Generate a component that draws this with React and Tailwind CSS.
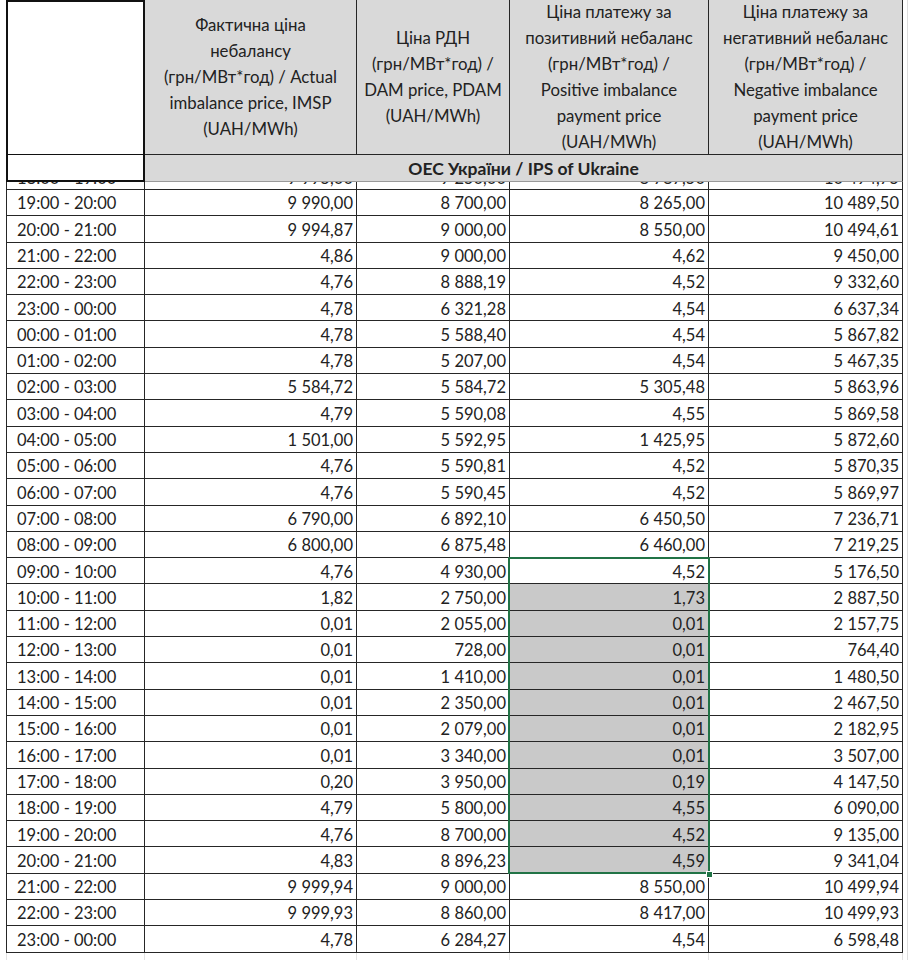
const rows = [
  ["19:00 - 20:00", "9 990,00", "8 700,00", "8 265,00", "10 489,50"],
  ["20:00 - 21:00", "9 994,87", "9 000,00", "8 550,00", "10 494,61"],
  ["21:00 - 22:00", "4,86", "9 000,00", "4,62", "9 450,00"],
  ["22:00 - 23:00", "4,76", "8 888,19", "4,52", "9 332,60"],
  ["23:00 - 00:00", "4,78", "6 321,28", "4,54", "6 637,34"],
  ["00:00 - 01:00", "4,78", "5 588,40", "4,54", "5 867,82"],
  ["01:00 - 02:00", "4,78", "5 207,00", "4,54", "5 467,35"],
  ["02:00 - 03:00", "5 584,72", "5 584,72", "5 305,48", "5 863,96"],
  ["03:00 - 04:00", "4,79", "5 590,08", "4,55", "5 869,58"],
  ["04:00 - 05:00", "1 501,00", "5 592,95", "1 425,95", "5 872,60"],
  ["05:00 - 06:00", "4,76", "5 590,81", "4,52", "5 870,35"],
  ["06:00 - 07:00", "4,76", "5 590,45", "4,52", "5 869,97"],
  ["07:00 - 08:00", "6 790,00", "6 892,10", "6 450,50", "7 236,71"],
  ["08:00 - 09:00", "6 800,00", "6 875,48", "6 460,00", "7 219,25"],
  ["09:00 - 10:00", "4,76", "4 930,00", "4,52", "5 176,50"],
  ["10:00 - 11:00", "1,82", "2 750,00", "1,73", "2 887,50"],
  ["11:00 - 12:00", "0,01", "2 055,00", "0,01", "2 157,75"],
  ["12:00 - 13:00", "0,01", "728,00", "0,01", "764,40"],
  ["13:00 - 14:00", "0,01", "1 410,00", "0,01", "1 480,50"],
  ["14:00 - 15:00", "0,01", "2 350,00", "0,01", "2 467,50"],
  ["15:00 - 16:00", "0,01", "2 079,00", "0,01", "2 182,95"],
  ["16:00 - 17:00", "0,01", "3 340,00", "0,01", "3 507,00"],
  ["17:00 - 18:00", "0,20", "3 950,00", "0,19", "4 147,50"],
  ["18:00 - 19:00", "4,79", "5 800,00", "4,55", "6 090,00"],
  ["19:00 - 20:00", "4,76", "8 700,00", "4,52", "9 135,00"],
  ["20:00 - 21:00", "4,83", "8 896,23", "4,59", "9 341,04"],
  ["21:00 - 22:00", "9 999,94", "9 000,00", "8 550,00", "10 499,94"],
  ["22:00 - 23:00", "9 999,93", "8 860,00", "8 417,00", "10 499,93"],
  ["23:00 - 00:00", "4,78", "6 284,27", "4,54", "6 598,48"],
];

// selection in the positive-imbalance column: rows 14..25, active cell is the first one
const SEL_FROM = 14;
const SEL_TO = 25;

const cols = "grid grid-cols-[139px_212px_153px_199px_194px]";

const headers = [
  ["Фактична ціна", "небалансу", "(грн/МВт*год) / Actual", "imbalance price, IMSP", "(UAH/MWh)"],
  ["Ціна РДН", "(грн/МВт*год) /", "DAM price, PDAM", "(UAH/MWh)"],
  ["Ціна платежу за", "позитивний небаланс", "(грн/МВт*год) /", "Positive imbalance", "payment price", "(UAH/MWh)"],
  ["Ціна платежу за", "негативний небаланс", "(грн/МВт*год) /", "Negative imbalance", "payment price", "(UAH/MWh)"],
];

function Cell({ value, i, selected, first, last, shaded }) {
  return (
    <div
      className={`relative h-[26.3px] border-b border-r border-[#262626] flex items-center pt-[2px] whitespace-nowrap ${
        i === 0 ? "border-l justify-start pl-[10px]" : "justify-end pr-[3px]"
      } ${shaded ? "bg-[#c9c9c9]" : ""}`}
    >
      {value}
      {selected && (
        <div
          className={`absolute -left-[2px] -right-[2px] -top-px -bottom-px border-x-2 border-[#217346] pointer-events-none ${
            first ? "border-t-2" : ""
          } ${last ? "border-b-2" : ""}`}
        />
      )}
      {last && (
        <div className="absolute -right-[5px] -bottom-[5px] w-[7px] h-[7px] bg-[#217346] border border-white z-10" />
      )}
    </div>
  );
}

export default function App() {
  return (
    <div className="w-[910px] h-[960px] bg-white overflow-hidden flex text-[16.5px] leading-none text-[#222] font-['Lato','Noto_Sans',sans-serif]">
      <div className="w-[903px] pl-[6px] flex flex-col">
        {/* header */}
        <div className={`${cols} grid-rows-[155px] h-[155px] shrink-0`}>
          <div className="border-t-2 border-x-2 border-b border-[#111] bg-white" />
          {headers.map((lines, k) => (
            <div
              key={k}
              className="min-h-0 bg-[#d9d9d9] border-r border-b border-[#262626] flex flex-col items-center justify-center leading-[26px] text-[16.8px]"
            >
              {lines.map((l, j) => (
                <span key={j} className="whitespace-nowrap">{l}</span>
              ))}
            </div>
          ))}
        </div>

        {/* grid section row */}
        <div className="grid grid-cols-[139px_758px] h-[27px] shrink-0">
          <div className="border-x-2 border-b-2 border-[#111] bg-white" />
          <div className="bg-[#d9d9d9] border-r border-[#262626] border-b border-b-[#9a9a9a] flex items-center justify-center font-bold text-[17.5px] pt-[2px]">
            ОЕС України / IPS of Ukraine
          </div>
        </div>

        {/* row cut by the frozen pane */}
        <div className={`${cols} h-[8px] shrink-0`}>
          {["18:00 - 19:00", "9 995,00", "9 250,00", "8 787,50", "10 494,75"].map((v, i) => (
            <div
              key={i}
              className={`h-[8px] overflow-hidden border-b border-r border-[#262626] ${i === 0 ? "border-l pl-[10px]" : "text-right pr-[3px]"}`}
            >
              <div className="leading-[26px] -mt-[17px] whitespace-nowrap">{v}</div>
            </div>
          ))}
        </div>

        {rows.map((r, n) => (
          <div key={n} className={`${cols} shrink-0`}>
            {r.map((v, i) => {
              const inSel = i === 3 && n >= SEL_FROM && n <= SEL_TO;
              return (
                <Cell
                  key={i}
                  value={v}
                  i={i}
                  selected={inSel}
                  first={inSel && n === SEL_FROM}
                  last={inSel && n === SEL_TO}
                  shaded={inSel && n !== SEL_FROM}
                />
              );
            })}
          </div>
        ))}

        {/* empty sheet grid below the table */}
        <div className={`${cols} flex-1`}>
          <div className="border-l border-r border-[#e1e1e1]" />
          <div className="border-r border-[#e1e1e1]" />
          <div className="border-r border-[#e1e1e1]" />
          <div className="border-r border-[#e1e1e1]" />
          <div className="border-r border-[#e1e1e1]" />
        </div>
      </div>
      <div className="w-[7px] flex">
        <div className="w-[4px]" />
        <div className="w-px bg-[#dedede]" />
      </div>
    </div>
  );
}
